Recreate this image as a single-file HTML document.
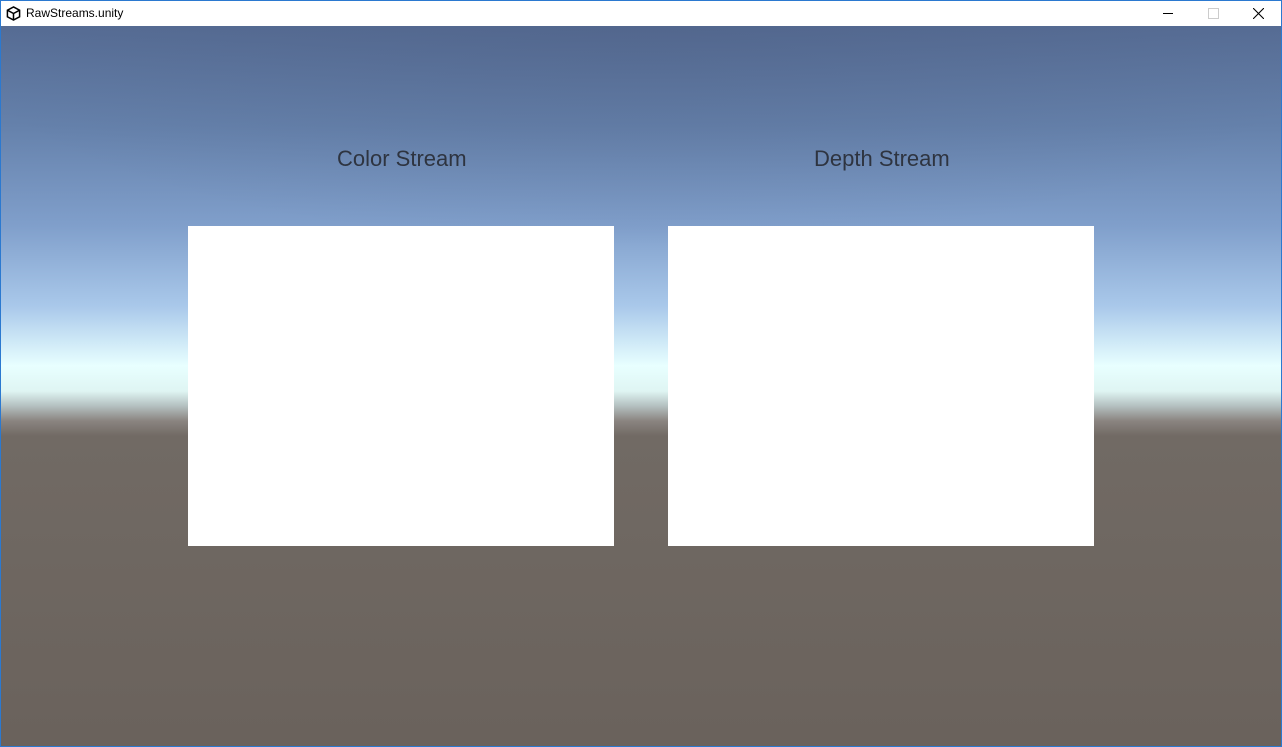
<!DOCTYPE html>
<html><head><style>
body{margin:0;width:1282px;height:747px;overflow:hidden;font-family:"Liberation Sans",sans-serif;}
.win{position:absolute;left:0;top:0;width:1280px;height:745px;border:1px solid #2b79d0;background:#fff;}
.title{position:absolute;left:0;top:0;width:1280px;height:25px;background:#fff;}
.title span{position:absolute;left:25px;top:5px;font-size:12px;color:#000;}
.scene{position:absolute;left:0;top:25px;width:1280px;height:720px;
background:linear-gradient(to bottom,#566c94 0px,#6581ab 100px,#809fcb 200px,#a9c8ea 280px,#e8ffff 340px,#dff5f3 365px,#b4c0c0 380px,#8a8480 395px,#716a64 410px,#6a625c 720px);}
.shade{position:absolute;left:0;top:25px;width:1280px;height:300px;background:radial-gradient(ellipse 700px 220px at 640px 0px,rgba(70,85,120,0.25),rgba(70,85,120,0));}
.lbl{position:absolute;top:145px;font-size:22px;color:#2e3440;}
.box{position:absolute;top:225px;width:426px;height:320px;background:#fff;}
</style></head><body>
<div class="win">
<div class="title">
<svg style="position:absolute;left:5px;top:5px" width="15" height="15" viewBox="0 0 16 16"><path d="M8 1 L14.5 4.5 L14.5 11.5 L8 15 L1.5 11.5 L1.5 4.5 Z" fill="none" stroke="#000" stroke-width="1.6"/><path d="M8 8 L8 15 M8 8 L1.5 4.5 M8 8 L14.5 4.5" stroke="#000" stroke-width="1.6"/></svg>
<span>RawStreams.unity</span>
<div style="position:absolute;left:1162px;top:12px;width:10px;height:1px;background:#000"></div>
<div style="position:absolute;left:1207px;top:7px;width:9px;height:9px;border:1px solid #ccc"></div>
<svg style="position:absolute;left:1252px;top:7px" width="11" height="11"><path d="M0 0L11 11M11 0L0 11" stroke="#000" stroke-width="1.1"/></svg>
</div>
<div class="scene"></div>
<div class="shade"></div>
<div class="lbl" style="left:336px">Color Stream</div>
<div class="lbl" style="left:813px">Depth Stream</div>
<div class="box" style="left:187px"></div>
<div class="box" style="left:667px"></div>
</div>
</body></html>
